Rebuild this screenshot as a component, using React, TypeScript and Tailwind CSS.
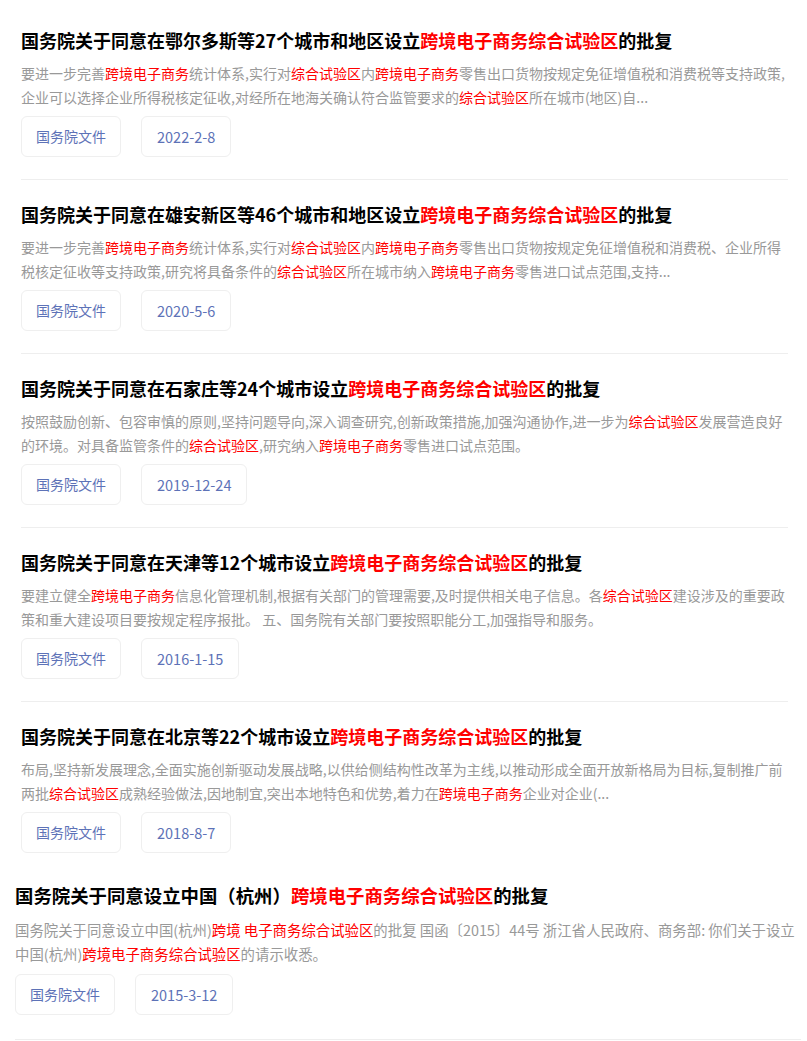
type Policy = {
    title: string;
    lines: string[];
    date: string;
};

const policies: Policy[] = [
    {
        title: "国务院关于同意在鄂尔多斯等27个城市和地区设立{跨境电子商务综合试验区}的批复",
        lines: [
            "要进一步完善{跨境电子商务}统计体系,实行对{综合试验区}内{跨境电子商务}零售出口货物按规定免征增值税和消费税等支持政策,",
            "企业可以选择企业所得税核定征收,对经所在地海关确认符合监管要求的{综合试验区}所在城市(地区)自...",
        ],
        date: "2022-2-8",
    },
    {
        title: "国务院关于同意在雄安新区等46个城市和地区设立{跨境电子商务综合试验区}的批复",
        lines: [
            "要进一步完善{跨境电子商务}统计体系,实行对{综合试验区}内{跨境电子商务}零售出口货物按规定免征增值税和消费税、企业所得",
            "税核定征收等支持政策,研究将具备条件的{综合试验区}所在城市纳入{跨境电子商务}零售进口试点范围,支持...",
        ],
        date: "2020-5-6",
    },
    {
        title: "国务院关于同意在石家庄等24个城市设立{跨境电子商务综合试验区}的批复",
        lines: [
            "按照鼓励创新、包容审慎的原则,坚持问题导向,深入调查研究,创新政策措施,加强沟通协作,进一步为{综合试验区}发展营造良好",
            "的环境。对具备监管条件的{综合试验区},研究纳入{跨境电子商务}零售进口试点范围。",
        ],
        date: "2019-12-24",
    },
    {
        title: "国务院关于同意在天津等12个城市设立{跨境电子商务综合试验区}的批复",
        lines: [
            "要建立健全{跨境电子商务}信息化管理机制,根据有关部门的管理需要,及时提供相关电子信息。各{综合试验区}建设涉及的重要政",
            "策和重大建设项目要按规定程序报批。 五、国务院有关部门要按照职能分工,加强指导和服务。",
        ],
        date: "2016-1-15",
    },
    {
        title: "国务院关于同意在北京等22个城市设立{跨境电子商务综合试验区}的批复",
        lines: [
            "布局,坚持新发展理念,全面实施创新驱动发展战略,以供给侧结构性改革为主线,以推动形成全面开放新格局为目标,复制推广前",
            "两批{综合试验区}成熟经验做法,因地制宜,突出本地特色和优势,着力在{跨境电子商务}企业对企业(...",
        ],
        date: "2018-8-7",
    },
];

const hangzhou: Policy = {
    title: "国务院关于同意设立中国（杭州）{跨境电子商务综合试验区}的批复",
    lines: [
        "国务院关于同意设立中国(杭州){跨境 电子商务综合试验区}的批复 国函〔2015〕44号 浙江省人民政府、商务部: 你们关于设立",
        "中国(杭州){跨境电子商务综合试验区}的请示收悉。",
    ],
    date: "2015-3-12",
};

// text inside {} is highlighted red
function Highlight({ text }: { text: string }) {
    const parts = text.split(/(\{[^}]*\})/);
    return (
        <>
            {parts.map((p, i) =>
                p.startsWith("{") ? (
                    <span key={i} className="text-[#ff0000]">{p.slice(1, -1)}</span>
                ) : (
                    <span key={i}>{p}</span>
                )
            )}
        </>
    );
}

function Tags({ date }: { date: string }) {
    return (
        <div className="flex gap-[20px]">
            <span className="inline-flex h-[41px] items-center rounded-[6px] border border-[#efefef] bg-white px-[14px] text-[14px] text-[#5d72b7]">
                国务院文件
            </span>
            <span className="inline-flex h-[41px] items-center rounded-[6px] border border-[#efefef] bg-white px-[15px] text-[14.5px] text-[#5d72b7]">
                {date}
            </span>
        </div>
    );
}

function PolicyItem({ item, last }: { item: Policy; last?: boolean }) {
    return (
        <div className={`pt-[21px] pb-[22px] ${last ? "" : "border-b border-[#eeeeee]"}`}>
            <h2 className="h-[26px] whitespace-nowrap text-[18px] font-bold leading-[26px] text-black">
                <Highlight text={item.title} />
            </h2>
            <div className="mt-[8px] text-[14px] leading-[24px] text-[#999999]">
                {item.lines.map((l, i) => (
                    <p key={i} className="overflow-hidden whitespace-nowrap">
                        <Highlight text={l} />
                    </p>
                ))}
            </div>
            <div className="mt-[7px]">
                <Tags date={item.date} />
            </div>
        </div>
    );
}

export default function App() {
    return (
        <div
            className="min-h-screen w-[807px] bg-white pt-[6px]"
            style={{ fontFamily: '"Noto Sans CJK SC", "Noto Sans", sans-serif' }}
        >
            <div className="pl-[21px] pr-[19px]">
                {policies.map((p, i) => (
                    <PolicyItem key={p.date} item={p} last={i === policies.length - 1} />
                ))}
            </div>
            <div className="-mt-[14px] pl-[15px] pr-[6px]">
                <div className="border-b border-[#eeeeee] pt-[21px] pb-[24px]">
                    <h2 className="h-[26px] whitespace-nowrap text-[18.4px] font-bold leading-[26px] text-black">
                        <Highlight text={hangzhou.title} />
                    </h2>
                    <div className="mt-[10px] text-[14.4px] leading-[24px] text-[#999999]">
                        {hangzhou.lines.map((l, i) => (
                            <p key={i} className="overflow-hidden whitespace-nowrap">
                                <Highlight text={l} />
                            </p>
                        ))}
                    </div>
                    <div className="mt-[8px]">
                        <Tags date={hangzhou.date} />
                    </div>
                </div>
            </div>
        </div>
    );
}
